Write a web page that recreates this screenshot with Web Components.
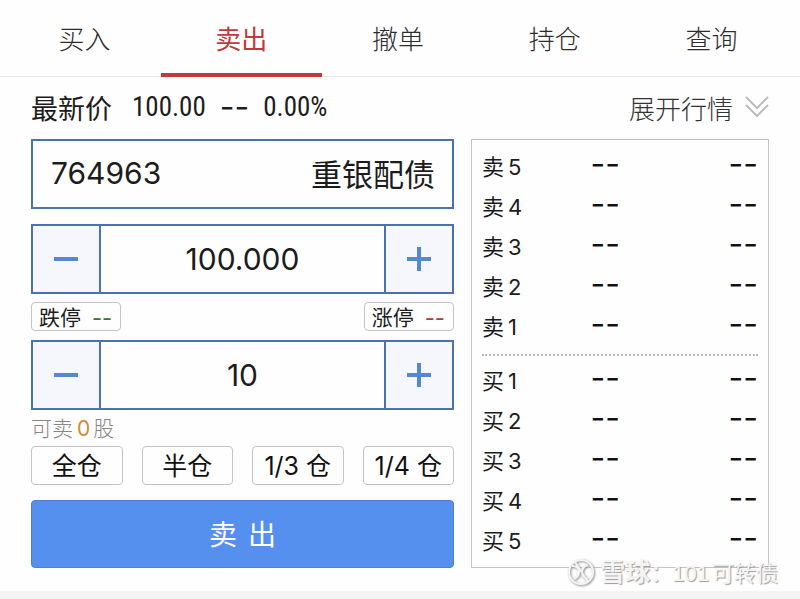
<!DOCTYPE html>
<html lang="zh-CN">
<head>
<meta charset="utf-8">
<meta name="viewport" content="width=device-width, initial-scale=1">
<title>卖出</title>
<style>
  :root {
    --blue: #4a72b0;
    --fill: #5590ef;
    --red: #c03a3c;
    --line: #c4c4c4;
    --cjk: "Noto Sans CJK SC", sans-serif;
    --num: Inter, "Noto Sans CJK SC", sans-serif;
    --quote: "Roboto Condensed", Roboto, sans-serif;
  }

  body {
    margin: 0;
    background: #fefefe;
    color: #1c1c1c;
    font-family: var(--cjk);
  }
</style>
</head>
<body>
<trade-page></trade-page>

<script>
class TradeTabs extends HTMLElement {
  constructor() {
    super();
    const shadow = this.attachShadow({ mode: "open" });
    const active = this.getAttribute("active");
    const tabs = ["买入", "卖出", "撤单", "持仓", "查询"];

    shadow.innerHTML = `
      <style>
        :host {
          display: block;
          border-bottom: 1px solid #e6e6e6;
        }

        nav {
          display: flex;
          padding: 0 10px 0 6px;
        }

        a {
          flex: 1;
          height: 76px;
          box-sizing: border-box;
          padding-top: 18px;
          color: #2c2c2c;
          font-size: 26px;
          font-weight: 300;
          line-height: 40px;
          text-align: center;
          text-decoration: none;
        }

        a.active {
          margin: 0 -2px -1px;
          height: 77px;
          padding: 18px 2px 0;
          border-bottom: 4px solid var(--red);
          color: var(--red);
          font-weight: 400;
        }
      </style>

      <nav>
        ${tabs.map((tab) => `<a href="#"${tab === active ? ' class="active" aria-current="page"' : ""}>${tab}</a>`).join("")}
      </nav>
    `;
  }
}

class QuoteBar extends HTMLElement {
  constructor() {
    super();
    const shadow = this.attachShadow({ mode: "open" });

    shadow.innerHTML = `
      <style>
        :host {
          display: flex;
          justify-content: space-between;
          align-items: center;
          height: 62px;
          box-sizing: border-box;
        }

        .quote {
          display: flex;
          align-items: center;
          font-size: 27px;
        }

        .quote b {
          margin-left: 20px;
          font: 400 27px/28px var(--quote);
          color: #1c1c1c;
        }

        .quote b.dash {
          margin-left: 14px;
          font: 400 32px/28px var(--num);
        }

        .quote b.rate {
          margin-left: 14px;
        }

        button {
          display: flex;
          align-items: center;
          gap: 12px;
          padding: 0;
          border: 0;
          background: none;
          color: #333;
          font: inherit;
          font-size: 26px;
          font-weight: 300;
        }

        svg {
          display: block;
          width: 24px;
          height: 24px;
          fill: none;
          stroke: #bdbdbd;
          stroke-width: 2;
        }
      </style>

      <div class="quote">
        <span>最新价</span><b>100.00</b><b class="dash">--</b><b class="rate">0.00%</b>
      </div>
      <button type="button">展开行情
        <svg viewBox="0 0 24 24" aria-hidden="true"><path d="M1 2l11 11L23 2M1 10l11 11 11-11"/></svg>
      </button>
    `;
  }
}

class StockField extends HTMLElement {
  constructor() {
    super();
    const shadow = this.attachShadow({ mode: "open" });

    shadow.innerHTML = `
      <style>
        :host {
          display: flex;
          align-items: center;
          height: 70px;
          box-sizing: border-box;
          padding: 0 17px 2px 18px;
          border: 2px solid var(--blue);
        }

        input {
          flex: 1;
          min-width: 0;
          padding: 0;
          border: 0;
          outline: 0;
          background: none;
          color: inherit;
          font: 400 30px/40px var(--num);
        }

        label {
          font-size: 31px;
          line-height: 40px;
        }
      </style>

      <input id="code" inputmode="numeric" value="${this.getAttribute("code")}">
      <label for="code"><slot></slot></label>
    `;
  }
}

class NumberStepper extends HTMLElement {
  constructor() {
    super();
    const shadow = this.attachShadow({ mode: "open" });
    const label = this.getAttribute("label");

    shadow.innerHTML = `
      <style>
        :host {
          display: flex;
          height: 70px;
          box-sizing: border-box;
          border: 2px solid var(--blue);
        }

        button {
          display: flex;
          align-items: center;
          justify-content: center;
          width: 68px;
          padding: 0;
          border: 0 solid var(--blue);
          background: #f6f7fc;
        }

        button:first-of-type {
          border-right-width: 2px;
        }

        button:last-of-type {
          border-left-width: 2px;
        }

        svg {
          display: block;
          width: 24px;
          height: 24px;
          stroke: #5488d2;
          stroke-width: 4;
        }

        input {
          flex: 1;
          min-width: 0;
          padding: 0;
          border: 0;
          outline: 0;
          background: none;
          color: inherit;
          font: 400 30px/40px var(--num);
          text-align: center;
        }
      </style>

      <button type="button" aria-label="减少${label}">
        <svg viewBox="0 0 24 24"><path d="M0 12h24"/></svg>
      </button>
      <input inputmode="decimal" aria-label="${label}" value="${this.getAttribute("value")}">
      <button type="button" aria-label="增加${label}">
        <svg viewBox="0 0 24 24"><path d="M0 12h24M12 0v24"/></svg>
      </button>
    `;
  }
}

class PriceLimit extends HTMLElement {
  constructor() {
    super();
    const shadow = this.attachShadow({ mode: "open" });

    shadow.innerHTML = `
      <style>
        button {
          display: flex;
          align-items: center;
          gap: 11px;
          height: 29px;
          padding: 0 8px 0 7px;
          border: 1px solid var(--line);
          border-radius: 4px;
          background: none;
          color: inherit;
          font: inherit;
          font-size: 21px;
          line-height: 27px;
        }

        span {
          padding-top: 4px;
          color: #2f7a2f;
          font: 400 22px/23px var(--num);
        }

        :host([type="up"]) span {
          color: #b8383c;
        }
      </style>

      <button type="button"><slot></slot><span>--</span></button>
    `;
  }
}

class PositionButton extends HTMLElement {
  constructor() {
    super();
    const shadow = this.attachShadow({ mode: "open" });

    shadow.innerHTML = `
      <style>
        :host {
          display: block;
          flex: 1;
        }

        button {
          width: 100%;
          height: 39px;
          padding: 0;
          border: 1px solid var(--line);
          border-radius: 4px;
          background: none;
          color: #111;
          font: 400 25px/36px var(--num);
          white-space: nowrap;
        }
      </style>

      <button type="button"><slot></slot></button>
    `;
  }
}

class OrderForm extends HTMLElement {
  constructor() {
    super();
    const shadow = this.attachShadow({ mode: "open" });

    shadow.innerHTML = `
      <style>
        :host {
          display: block;
          min-width: 0;
        }

        stock-field {
          margin-bottom: 15px;
        }

        .limits {
          display: flex;
          justify-content: space-between;
          padding: 8px 0 9px;
        }

        .available {
          margin: 2px 0;
          color: #858585;
          font-size: 21px;
          font-weight: 300;
          line-height: 31px;
        }

        .available b {
          margin: 0 3px 0 4px;
          color: #d08a35;
          font: 400 21px/30px var(--num);
        }

        .positions {
          display: flex;
          gap: 19px;
        }

        .submit {
          display: block;
          width: 100%;
          height: 68px;
          margin-top: 15px;
          padding: 0 0 3px;
          border: 1px solid #4d7fcb;
          border-radius: 4px;
          background: var(--fill);
          color: #fff;
          font: 400 28px/40px var(--cjk);
        }

        .submit span + span {
          margin-left: 11px;
        }
      </style>

      <stock-field code="764963">重银配债</stock-field>
      <number-stepper label="价格" value="100.000"></number-stepper>
      <div class="limits">
        <price-limit type="down">跌停</price-limit>
        <price-limit type="up">涨停</price-limit>
      </div>
      <number-stepper label="数量" value="10"></number-stepper>
      <p class="available">可卖<b>0</b>股</p>
      <div class="positions">
        <position-button>全仓</position-button>
        <position-button>半仓</position-button>
        <position-button>1/3 仓</position-button>
        <position-button>1/4 仓</position-button>
      </div>
      <button class="submit" type="submit"><span>卖</span><span>出</span></button>
    `;
  }
}

class OrderBook extends HTMLElement {
  constructor() {
    super();
    const shadow = this.attachShadow({ mode: "open" });
    const row = (side, level) => `
      <tr><th scope="row">${side}<span>${level}</span></th><td>--</td><td>--</td></tr>`;

    shadow.innerHTML = `
      <style>
        :host {
          display: block;
          min-width: 0;
          box-sizing: border-box;
          padding: 6px 10px 5px;
          border: 1px solid var(--line);
        }

        table {
          width: 100%;
          border-spacing: 0;
          table-layout: fixed;
        }

        table + table {
          margin-top: 8px;
          padding-top: 4px;
          border-top: 2px dotted #b5b5b5;
        }

        th, td {
          height: 40px;
          box-sizing: border-box;
          padding: 0;
          text-align: right;
          vertical-align: middle;
        }

        th {
          width: 30%;
          font-weight: 400;
          font-size: 22px;
          line-height: 36px;
          text-align: left;
        }

        th span {
          margin-left: 4px;
          font-family: var(--num);
        }

        td {
          padding-bottom: 4px;
          color: #111;
          font: 400 32px/36px var(--num);
        }

        td:nth-child(2) {
          width: 20%;
        }
      </style>

      <table aria-label="卖盘">${[5, 4, 3, 2, 1].map((n) => row("卖", n)).join("")}</table>
      <table aria-label="买盘">${[1, 2, 3, 4, 5].map((n) => row("买", n)).join("")}</table>
    `;
  }
}

class SourceMark extends HTMLElement {
  constructor() {
    super();
    const shadow = this.attachShadow({ mode: "open" });

    shadow.innerHTML = `
      <style>
        :host {
          display: flex;
          align-items: center;
          gap: 5px;
          color: #f4f4f4;
          font: 400 22px/30px var(--cjk);
          text-shadow: 1px 1px 1px #999;
          white-space: nowrap;
        }

        b {
          font-size: 25px;
          font-weight: 700;
        }

        span {
          margin-right: 3px;
          font-family: "Liberation Sans", sans-serif;
        }

        svg {
          display: block;
          width: 28px;
          height: 28px;
          fill: none;
          stroke: #f4f4f4;
          stroke-width: 2;
          filter: drop-shadow(1px 1px 1px #888);
        }
      </style>

      <svg viewBox="0 0 28 28" aria-hidden="true">
        <circle cx="14" cy="14" r="12"/>
        <path d="M5 8c4 0 7 2 7 6s-2 5-5 7M21 7c-4 1-6 3-6 7s2 6 6 7M8 4l13 20"/>
      </svg>
      <div><b>雪球</b>：<span>101</span>可转债</div>
    `;
  }
}

class TradePage extends HTMLElement {
  constructor() {
    super();
    const shadow = this.attachShadow({ mode: "open" });

    shadow.innerHTML = `
      <style>
        :host {
          position: relative;
          display: flex;
          flex-direction: column;
          min-height: 100vh;
        }

        quote-bar {
          padding: 0 31px 2px;
        }

        main {
          display: grid;
          grid-template-columns: 423fr 298fr;
          gap: 17px;
          padding: 0 31px 23px;
        }

        footer {
          flex: 1;
          background: #f4f4f4;
        }

        /* sits over the corner of the order book */
        source-mark {
          position: absolute;
          right: 22px;
          bottom: 10px;
        }
      </style>

      <trade-tabs active="卖出"></trade-tabs>
      <quote-bar></quote-bar>
      <main>
        <order-form></order-form>
        <order-book></order-book>
      </main>
      <footer></footer>
      <source-mark></source-mark>
    `;
  }
}

// Define the custom elements
customElements.define("trade-tabs", TradeTabs);
customElements.define("quote-bar", QuoteBar);
customElements.define("stock-field", StockField);
customElements.define("number-stepper", NumberStepper);
customElements.define("price-limit", PriceLimit);
customElements.define("position-button", PositionButton);
customElements.define("order-form", OrderForm);
customElements.define("order-book", OrderBook);
customElements.define("source-mark", SourceMark);
customElements.define("trade-page", TradePage);
</script>
</body>
</html>
